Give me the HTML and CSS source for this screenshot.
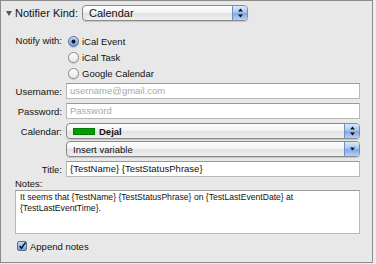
FILE: index.html
```html
<!DOCTYPE html>
<html lang="en">
<head>
    <meta charset="UTF-8">
    <title>Notifier Settings</title>
    <link rel="stylesheet" href="styles.css">
</head>
<body>
    <div class="panel">
        <div class="header">
            <span class="disclosure"></span>
            <span class="header-label">Notifier Kind:</span>
            <div class="popup popup-kind">
                <span class="popup-text">Calendar</span>
                <span class="stepper">
                    <svg width="7" height="10" viewBox="0 0 7 10"><path d="M3.5 0.5 L6 3.5 L1 3.5 Z M1 6.5 L6 6.5 L3.5 9.5 Z" fill="#111"/></svg>
                </span>
            </div>
        </div>

        <div class="row radios">
            <span class="label">Notify with:</span>
            <div class="radio-list">
                <div class="radio-item"><span class="radio checked"></span>iCal Event</div>
                <div class="radio-item"><span class="radio"></span>iCal Task</div>
                <div class="radio-item"><span class="radio"></span>Google Calendar</div>
            </div>
        </div>

        <div class="row row-user">
            <span class="label">Username:</span>
            <div class="field placeholder">username@gmail.com</div>
        </div>

        <div class="row row-pass">
            <span class="label">Password:</span>
            <div class="field placeholder">Password</div>
        </div>

        <div class="row row-cal">
            <span class="label">Calendar:</span>
            <div class="popup popup-wide">
                <span class="swatch"></span>
                <span class="popup-text bold">Dejal</span>
                <span class="stepper">
                    <svg width="7" height="10" viewBox="0 0 7 10"><path d="M3.5 0.5 L6 3.5 L1 3.5 Z M1 6.5 L6 6.5 L3.5 9.5 Z" fill="#111"/></svg>
                </span>
            </div>
        </div>

        <div class="row row-insert">
            <span class="label"></span>
            <div class="popup popup-wide">
                <span class="popup-text small">Insert variable</span>
                <span class="stepper">
                    <svg width="7" height="6" viewBox="0 0 7 6"><path d="M1 1.5 L6 1.5 L3.5 4.5 Z" fill="#111"/></svg>
                </span>
            </div>
        </div>

        <div class="row row-title">
            <span class="label">Title:</span>
            <div class="field">{TestName} {TestStatusPhrase}</div>
        </div>

        <div class="notes-label">Notes:</div>
        <div class="notes">It seems that {TestName} {TestStatusPhrase} on {TestLastEventDate} at {TestLastEventTime}.</div>

        <div class="append">
            <span class="checkbox">
                <svg width="10" height="10" viewBox="0 0 10 10"><path d="M2 5 L4.3 7.8 L9.5 0.5" fill="none" stroke="#111" stroke-width="1.8"/></svg>
            </span>
            Append notes
        </div>
    </div>
</body>
</html>
```

FILE: styles.css
```css
* {
    margin: 0;
    padding: 0;
    box-sizing: border-box;
}

body {
    font-family: 'Lucida Grande', 'Liberation Sans', Arial, sans-serif;
    font-size: 9.5px;
    color: #111;
    background: #ededed;
}

.panel {
    width: 373px;
    height: 263px;
    background: #e8e8e8;
    border: 1px solid #8c8c8c;
    padding: 4px 12px 0 0;
}

/* header row */
.header {
    display: flex;
    align-items: center;
    height: 16px;
}

.disclosure {
    width: 0;
    height: 0;
    margin-left: 5px;
    border-left: 3px solid transparent;
    border-right: 3px solid transparent;
    border-top: 5px solid #555;
}

.header-label {
    margin-left: 3px;
    font-size: 11px;
    width: 63px;
}

/* popup buttons */
.popup {
    display: flex;
    align-items: center;
    height: 16px;
    border: 1px solid #8a8a8a;
    border-radius: 4px;
    background: linear-gradient(#ffffff 0%, #f4f4f4 45%, #e2e2e2 55%, #f0f0f0 100%);
    box-shadow: 0 1px 1px rgba(0,0,0,0.15);
    overflow: hidden;
}

.popup-kind {
    margin-left: 4px;
    width: 166px;
}

.popup-wide {
    flex: 1;
}

.popup-text {
    flex: 1;
    padding-left: 6px;
    font-size: 11px;
}

.popup-text.bold {
    font-weight: bold;
    font-size: 9.5px;
    padding-left: 4px;
}

.popup-text.small {
    font-size: 9.5px;
}

.stepper {
    width: 15px;
    align-self: stretch;
    display: flex;
    align-items: center;
    justify-content: center;
    border-left: 1px solid #6f8fc0;
    background: linear-gradient(#d9e8fb 0%, #a9c8f2 45%, #7fa9e8 55%, #b6d3f7 100%);
}

.swatch {
    width: 22px;
    height: 7px;
    margin-left: 6px;
    background: #00a000;
    border: 1px solid #007a00;
}

/* form rows */
.row {
    display: flex;
    align-items: center;
}

.label {
    width: 61px;
    margin-right: 4px;
    text-align: right;
    flex-shrink: 0;
}

.radios {
    align-items: flex-start;
    margin-top: 12px;
}

.radios .label {
    line-height: 16px;
}

.radio-item {
    display: flex;
    align-items: center;
    height: 16px;
}

.radio {
    width: 11px;
    height: 11px;
    margin: 0 3px 0 2px;
    border-radius: 50%;
    border: 1px solid #8a8a8a;
    background: linear-gradient(#ffffff, #e6e6e6);
    box-shadow: 0 1px 1px rgba(0,0,0,0.12);
}

.radio.checked {
    border-color: #4f6f9f;
    background: radial-gradient(circle, #1a1a1a 0, #1a1a1a 1.8px, transparent 2.3px),
                linear-gradient(#c4dbf8, #6f9de0);
}

.field {
    flex: 1;
    height: 16px;
    line-height: 14px;
    padding-left: 3px;
    background: #fff;
    border: 1px solid #b8b8b8;
    border-top-color: #9a9a9a;
    white-space: nowrap;
    overflow: hidden;
}

.placeholder {
    color: #a8a8a8;
}

.row-user { margin-top: 2px; }
.row-pass { margin-top: 4px; }
.row-cal { margin-top: 4px; }
.row-insert { margin-top: 2px; }
.row-title { margin-top: 4px; }

/* notes */
.notes-label {
    margin-left: 14px;
    height: 13px;
    line-height: 13px;
    margin-top: 0;
}

.notes {
    margin-left: 14px;
    height: 44px;
    padding: 1px 4px;
    font-family: 'Liberation Sans', Arial, sans-serif;
    font-size: 8.6px;
    line-height: 11px;
    background: #fff;
    border: 1px solid #b8b8b8;
    border-top-color: #9a9a9a;
}

.append {
    display: flex;
    align-items: center;
    height: 12px;
    margin-top: 6px;
    margin-left: 16px;
}

.checkbox {
    width: 10px;
    height: 10px;
    margin-right: 3px;
    display: flex;
    align-items: center;
    justify-content: center;
    border: 1px solid #4f6f9f;
    border-radius: 2px;
    background: linear-gradient(#c4dbf8, #6f9de0);
}
```
